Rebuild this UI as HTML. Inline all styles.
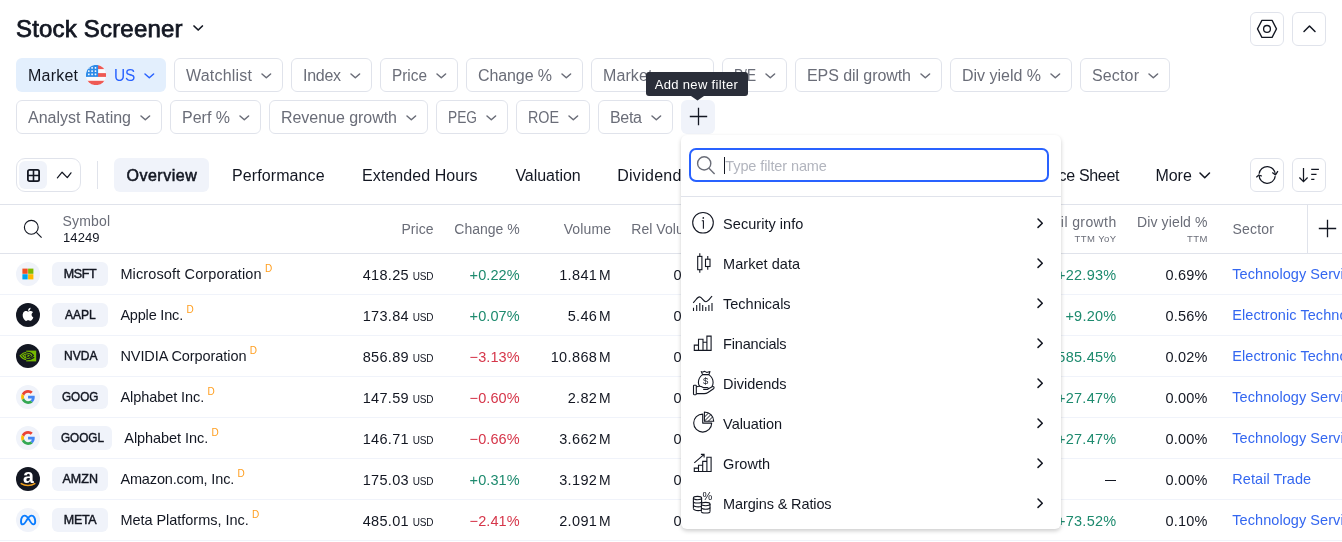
<!DOCTYPE html><html><head><meta charset="utf-8"><title>Stock Screener</title><style>html,body{margin:0;padding:0;background:#fff;}body{width:1342px;height:542px;position:relative;overflow:hidden;font-family:"Liberation Sans",sans-serif;}.a{position:absolute;box-sizing:border-box;display:block}.t{position:absolute;white-space:pre;line-height:1;}#w{position:absolute;left:0;top:0;width:1342px;height:542px;overflow:hidden;will-change:transform;}</style></head><body><div id="w">
<svg class="a" style="left:192.0px;top:24.4px" width="12.4" height="8" viewBox="-2 -2 12.4 8"><path d="M0 0 L4.2 4 L8.4 0" fill="none" stroke="#131722" stroke-width="1.7" stroke-linecap="round" stroke-linejoin="round"/></svg>
<div class="a" style="left:1250px;top:12px;width:34px;height:34px;background:#fff;border-radius:6px;border:1px solid #e0e3eb;"></div>
<div class="a" style="left:1292px;top:12px;width:34px;height:34px;background:#fff;border-radius:6px;border:1px solid #e0e3eb;"></div>
<svg class="a" style="left:1256px;top:18px" width="22" height="22" viewBox="0 0 22 22"><path d="M5.9 2.4 H16.1 L20.5 10.9 L16.1 19.4 H5.9 L1.5 10.9 Z" fill="none" stroke="#131722" stroke-width="1.3" stroke-linejoin="round"/><circle cx="11" cy="10.9" r="3.4" fill="none" stroke="#131722" stroke-width="1.3"/></svg>
<svg class="a" style="left:1301.5px;top:23.75px" width="15" height="9.5" viewBox="-2 -2 15 9.5"><path d="M0 5.5 L5.5 0 L11 5.5" fill="none" stroke="#131722" stroke-width="1.5" stroke-linecap="round" stroke-linejoin="round"/></svg>
<div class="a" style="left:16px;top:58px;width:150px;height:34px;background:#e3effd;border-radius:6px;"></div>
<svg class="a" style="left:142.7px;top:71.6px" width="12.6" height="7.8" viewBox="-2 -2 12.6 7.8"><path d="M0 0 L4.3 3.8 L8.6 0" fill="none" stroke="#2962ff" stroke-width="1.5" stroke-linecap="round" stroke-linejoin="round"/></svg>
<svg class="a" style="left:86px;top:65px" width="20" height="20" viewBox="0 0 20 20"><defs><clipPath id="fc"><circle cx="10" cy="10" r="10.1"/></clipPath></defs><g clip-path="url(#fc)"><rect width="20" height="21" y="-0.5" fill="#fafbfe"/><rect x="12" y="-0.5" width="8" height="4.6" fill="#ee5a55"/><rect x="12" y="8.1" width="8" height="3.8" fill="#ee5a55"/><rect x="0" y="15.8" width="20" height="4.6" fill="#ee5a55"/><rect x="0" y="-0.5" width="12.1" height="12.4" fill="#2e8be8"/><g fill="#f2f7fd"><rect x="1.9499999999999997" y="2.05" width="1.7" height="1.7" rx="0.4"/><rect x="1.9499999999999997" y="5.25" width="1.7" height="1.7" rx="0.4"/><rect x="1.9499999999999997" y="8.450000000000001" width="1.7" height="1.7" rx="0.4"/><rect x="5.25" y="2.05" width="1.7" height="1.7" rx="0.4"/><rect x="5.25" y="5.25" width="1.7" height="1.7" rx="0.4"/><rect x="5.25" y="8.450000000000001" width="1.7" height="1.7" rx="0.4"/><rect x="8.65" y="2.05" width="1.7" height="1.7" rx="0.4"/><rect x="8.65" y="5.25" width="1.7" height="1.7" rx="0.4"/><rect x="8.65" y="8.450000000000001" width="1.7" height="1.7" rx="0.4"/></g></g></svg>
<div class="a" style="left:174px;top:58px;width:109px;height:34px;background:#fff;border-radius:6px;border:1px solid #e0e3eb;"></div>
<svg class="a" style="left:259.7px;top:71.6px" width="12.6" height="7.8" viewBox="-2 -2 12.6 7.8"><path d="M0 0 L4.3 3.8 L8.6 0" fill="none" stroke="#6a6d78" stroke-width="1.5" stroke-linecap="round" stroke-linejoin="round"/></svg>
<div class="a" style="left:291px;top:58px;width:81px;height:34px;background:#fff;border-radius:6px;border:1px solid #e0e3eb;"></div>
<svg class="a" style="left:348.7px;top:71.6px" width="12.6" height="7.8" viewBox="-2 -2 12.6 7.8"><path d="M0 0 L4.3 3.8 L8.6 0" fill="none" stroke="#6a6d78" stroke-width="1.5" stroke-linecap="round" stroke-linejoin="round"/></svg>
<div class="a" style="left:380px;top:58px;width:78px;height:34px;background:#fff;border-radius:6px;border:1px solid #e0e3eb;"></div>
<svg class="a" style="left:434.7px;top:71.6px" width="12.6" height="7.8" viewBox="-2 -2 12.6 7.8"><path d="M0 0 L4.3 3.8 L8.6 0" fill="none" stroke="#6a6d78" stroke-width="1.5" stroke-linecap="round" stroke-linejoin="round"/></svg>
<div class="a" style="left:466px;top:58px;width:117px;height:34px;background:#fff;border-radius:6px;border:1px solid #e0e3eb;"></div>
<svg class="a" style="left:559.7px;top:71.6px" width="12.6" height="7.8" viewBox="-2 -2 12.6 7.8"><path d="M0 0 L4.3 3.8 L8.6 0" fill="none" stroke="#6a6d78" stroke-width="1.5" stroke-linecap="round" stroke-linejoin="round"/></svg>
<div class="a" style="left:591px;top:58px;width:123px;height:34px;background:#fff;border-radius:6px;border:1px solid #e0e3eb;"></div>
<svg class="a" style="left:690.7px;top:71.6px" width="12.6" height="7.8" viewBox="-2 -2 12.6 7.8"><path d="M0 0 L4.3 3.8 L8.6 0" fill="none" stroke="#6a6d78" stroke-width="1.5" stroke-linecap="round" stroke-linejoin="round"/></svg>
<div class="a" style="left:722px;top:58px;width:65px;height:34px;background:#fff;border-radius:6px;border:1px solid #e0e3eb;"></div>
<svg class="a" style="left:763.7px;top:71.6px" width="12.6" height="7.8" viewBox="-2 -2 12.6 7.8"><path d="M0 0 L4.3 3.8 L8.6 0" fill="none" stroke="#6a6d78" stroke-width="1.5" stroke-linecap="round" stroke-linejoin="round"/></svg>
<div class="a" style="left:795px;top:58px;width:147px;height:34px;background:#fff;border-radius:6px;border:1px solid #e0e3eb;"></div>
<svg class="a" style="left:918.7px;top:71.6px" width="12.6" height="7.8" viewBox="-2 -2 12.6 7.8"><path d="M0 0 L4.3 3.8 L8.6 0" fill="none" stroke="#6a6d78" stroke-width="1.5" stroke-linecap="round" stroke-linejoin="round"/></svg>
<div class="a" style="left:950px;top:58px;width:122px;height:34px;background:#fff;border-radius:6px;border:1px solid #e0e3eb;"></div>
<svg class="a" style="left:1048.7px;top:71.6px" width="12.6" height="7.8" viewBox="-2 -2 12.6 7.8"><path d="M0 0 L4.3 3.8 L8.6 0" fill="none" stroke="#6a6d78" stroke-width="1.5" stroke-linecap="round" stroke-linejoin="round"/></svg>
<div class="a" style="left:1080px;top:58px;width:90px;height:34px;background:#fff;border-radius:6px;border:1px solid #e0e3eb;"></div>
<svg class="a" style="left:1146.7px;top:71.6px" width="12.6" height="7.8" viewBox="-2 -2 12.6 7.8"><path d="M0 0 L4.3 3.8 L8.6 0" fill="none" stroke="#6a6d78" stroke-width="1.5" stroke-linecap="round" stroke-linejoin="round"/></svg>
<div class="a" style="left:16px;top:100px;width:146px;height:34px;background:#fff;border-radius:6px;border:1px solid #e0e3eb;"></div>
<svg class="a" style="left:138.7px;top:113.6px" width="12.6" height="7.8" viewBox="-2 -2 12.6 7.8"><path d="M0 0 L4.3 3.8 L8.6 0" fill="none" stroke="#6a6d78" stroke-width="1.5" stroke-linecap="round" stroke-linejoin="round"/></svg>
<div class="a" style="left:170px;top:100px;width:91px;height:34px;background:#fff;border-radius:6px;border:1px solid #e0e3eb;"></div>
<svg class="a" style="left:237.7px;top:113.6px" width="12.6" height="7.8" viewBox="-2 -2 12.6 7.8"><path d="M0 0 L4.3 3.8 L8.6 0" fill="none" stroke="#6a6d78" stroke-width="1.5" stroke-linecap="round" stroke-linejoin="round"/></svg>
<div class="a" style="left:269px;top:100px;width:159px;height:34px;background:#fff;border-radius:6px;border:1px solid #e0e3eb;"></div>
<svg class="a" style="left:404.7px;top:113.6px" width="12.6" height="7.8" viewBox="-2 -2 12.6 7.8"><path d="M0 0 L4.3 3.8 L8.6 0" fill="none" stroke="#6a6d78" stroke-width="1.5" stroke-linecap="round" stroke-linejoin="round"/></svg>
<div class="a" style="left:436px;top:100px;width:72px;height:34px;background:#fff;border-radius:6px;border:1px solid #e0e3eb;"></div>
<svg class="a" style="left:484.7px;top:113.6px" width="12.6" height="7.8" viewBox="-2 -2 12.6 7.8"><path d="M0 0 L4.3 3.8 L8.6 0" fill="none" stroke="#6a6d78" stroke-width="1.5" stroke-linecap="round" stroke-linejoin="round"/></svg>
<div class="a" style="left:516px;top:100px;width:74px;height:34px;background:#fff;border-radius:6px;border:1px solid #e0e3eb;"></div>
<svg class="a" style="left:566.7px;top:113.6px" width="12.6" height="7.8" viewBox="-2 -2 12.6 7.8"><path d="M0 0 L4.3 3.8 L8.6 0" fill="none" stroke="#6a6d78" stroke-width="1.5" stroke-linecap="round" stroke-linejoin="round"/></svg>
<div class="a" style="left:598px;top:100px;width:75px;height:34px;background:#fff;border-radius:6px;border:1px solid #e0e3eb;"></div>
<svg class="a" style="left:649.7px;top:113.6px" width="12.6" height="7.8" viewBox="-2 -2 12.6 7.8"><path d="M0 0 L4.3 3.8 L8.6 0" fill="none" stroke="#6a6d78" stroke-width="1.5" stroke-linecap="round" stroke-linejoin="round"/></svg>
<div class="a" style="left:681px;top:100px;width:34px;height:34px;background:#f0f3fa;border-radius:6px;"></div>
<svg class="a" style="left:689px;top:107px" width="19" height="19" viewBox="0 0 19 19"><path d="M9.5 0.8 V18.2 M0.8 9.5 H18.2" stroke="#131722" stroke-width="1.3" fill="none"/></svg>
<div class="a" style="left:16px;top:158px;width:65px;height:34px;background:#fff;border-radius:9px;border:1px solid #e0e3eb;"></div>
<div class="a" style="left:19px;top:161px;width:28px;height:28px;background:#f0f3fa;border-radius:6px;"></div>
<svg class="a" style="left:26px;top:168px" width="15" height="15" viewBox="0 0 15 15"><rect x="1.9" y="1.9" width="11.2" height="11.2" rx="1.6" fill="none" stroke="#131722" stroke-width="1.8"/><path d="M1.9 7.5 H13.1 M7.5 1.9 V13.1" stroke="#131722" stroke-width="1.6" fill="none"/></svg>
<svg class="a" style="left:55px;top:168px" width="18" height="14" viewBox="0 0 18 14"><path d="M2.4 9.8 L7.1 4.2 L12.3 9.6 L16 4.8" fill="none" stroke="#131722" stroke-width="1.25" stroke-linejoin="round" stroke-linecap="round"/></svg>
<div class="a" style="left:97px;top:161px;width:1px;height:28px;background:#e0e3eb;border-radius:0px;"></div>
<div class="a" style="left:114px;top:158px;width:95px;height:34px;background:#f0f3fa;border-radius:6px;"></div>
<svg class="a" style="left:1198.25px;top:171.1px" width="13.5" height="8.8" viewBox="-2 -2 13.5 8.8"><path d="M0 0 L4.75 4.8 L9.5 0" fill="none" stroke="#131722" stroke-width="1.5" stroke-linecap="round" stroke-linejoin="round"/></svg>
<div class="a" style="left:1250px;top:158px;width:34px;height:34px;background:#fff;border-radius:6px;border:1px solid #e0e3eb;"></div>
<div class="a" style="left:1292px;top:158px;width:34px;height:34px;background:#fff;border-radius:6px;border:1px solid #e0e3eb;"></div>
<svg class="a" style="left:1256px;top:164px" width="23" height="22" viewBox="0 0 23 22"><g fill="none" stroke="#131722" stroke-width="1.25" stroke-linejoin="round"><path d="M3.15 9.8 A8.1 8.1 0 0 1 19.3 10.5"/><path d="M19.25 12.1 A8.1 8.1 0 0 1 3.1 11.4"/><path d="M16.3 8.5 L19.5 10.9 L21.9 7.1"/><path d="M0.3 13.4 L2.8 11 L5.8 12.1"/></g></svg>
<svg class="a" style="left:1298px;top:165px" width="22" height="20" viewBox="0 0 22 20"><path d="M5.5 3 V16.4 M1.4 12.5 L5.5 16.6 L9.6 12.5" fill="none" stroke="#131722" stroke-width="1.25"/><path d="M13.2 4.3 H20.9 M13.2 9.4 H18.5 M13.2 14.35 H16.4" stroke="#131722" stroke-width="1.25" fill="none"/></svg>
<div class="a" style="left:0px;top:204px;width:1342px;height:1px;background:#e0e3eb;border-radius:0px;"></div>
<div class="a" style="left:0px;top:253px;width:1342px;height:1px;background:#e0e3eb;border-radius:0px;"></div>
<svg class="a" style="left:22px;top:218.4px" width="22" height="22" viewBox="0 0 22 22"><circle cx="9.3" cy="9.3" r="6.9" fill="none" stroke="#131722" stroke-width="1.15"/><path d="M14.4 14.4 L19.6 19.6" stroke="#131722" stroke-width="1.15" fill="none"/></svg>
<div class="a" style="left:1307px;top:205px;width:1px;height:48px;background:#e0e3eb;border-radius:0px;"></div>
<svg class="a" style="left:1318px;top:219px" width="19" height="19" viewBox="0 0 19 19"><path d="M9.5 0.8 V18.2 M0.8 9.5 H18.2" stroke="#131722" stroke-width="1.3" fill="none"/></svg>
<div class="a" style="left:0px;top:294px;width:1342px;height:1px;background:#f0f3fa;border-radius:0px;"></div>
<div class="a" style="left:52px;top:262px;width:56px;height:24px;background:#f0f3fa;border-radius:6px;"></div>
<div class="a" style="left:0px;top:335px;width:1342px;height:1px;background:#f0f3fa;border-radius:0px;"></div>
<div class="a" style="left:52px;top:303px;width:56px;height:24px;background:#f0f3fa;border-radius:6px;"></div>
<div class="a" style="left:0px;top:376px;width:1342px;height:1px;background:#f0f3fa;border-radius:0px;"></div>
<div class="a" style="left:52px;top:344px;width:56px;height:24px;background:#f0f3fa;border-radius:6px;"></div>
<div class="a" style="left:0px;top:417px;width:1342px;height:1px;background:#f0f3fa;border-radius:0px;"></div>
<div class="a" style="left:52px;top:385px;width:56px;height:24px;background:#f0f3fa;border-radius:6px;"></div>
<div class="a" style="left:0px;top:458px;width:1342px;height:1px;background:#f0f3fa;border-radius:0px;"></div>
<div class="a" style="left:52px;top:426px;width:60px;height:24px;background:#f0f3fa;border-radius:6px;"></div>
<div class="a" style="left:0px;top:499px;width:1342px;height:1px;background:#f0f3fa;border-radius:0px;"></div>
<div class="a" style="left:52px;top:467px;width:56px;height:24px;background:#f0f3fa;border-radius:6px;"></div>
<div class="a" style="left:1105px;top:479.85px;width:11.2px;height:1.15px;background:#131722;border-radius:0px;"></div>
<div class="a" style="left:0px;top:540px;width:1342px;height:1px;background:#f0f3fa;border-radius:0px;"></div>
<div class="a" style="left:52px;top:508px;width:56px;height:24px;background:#f0f3fa;border-radius:6px;"></div>
<div class="a" style="left:16px;top:262px;width:24px;height:24px;background:#f0f3fa;border-radius:12px;"></div>
<svg class="a" style="left:16px;top:262px" width="24" height="24" viewBox="0 0 24 24"><rect x="6.4" y="6.6" width="5.3" height="5.2" fill="#f25022"/><rect x="12.1" y="6.6" width="5.3" height="5.2" fill="#7fba00"/><rect x="6.4" y="12.2" width="5.3" height="5.2" fill="#00a4ef"/><rect x="12.1" y="12.2" width="5.3" height="5.2" fill="#ffb900"/></svg>
<div class="a" style="left:16px;top:303px;width:24px;height:24px;background:#131722;border-radius:12px;"></div>
<svg class="a" style="left:16px;top:303px" width="24" height="24" viewBox="0 0 24 24"><g transform="translate(5.45,4.8) scale(0.545)" fill="#fff"><path d="M12.152 6.896c-.948 0-2.415-1.078-3.96-1.04-2.04.027-3.91 1.183-4.961 3.014-2.117 3.675-.546 9.103 1.519 12.09 1.013 1.454 2.208 3.09 3.792 3.039 1.52-.065 2.09-.987 3.935-.987 1.831 0 2.35.987 3.96.948 1.637-.026 2.676-1.48 3.676-2.948 1.156-1.688 1.636-3.325 1.662-3.415-.039-.013-3.182-1.221-3.22-4.857-.026-3.04 2.48-4.494 2.597-4.559-1.429-2.09-3.623-2.324-4.39-2.376-2-.156-3.675 1.09-4.61 1.09zM15.53 3.83c.843-1.012 1.4-2.427 1.245-3.83-1.207.052-2.662.805-3.532 1.818-.78.896-1.454 2.338-1.273 3.714 1.338.104 2.715-.688 3.559-1.701"/></g></svg>
<div class="a" style="left:16px;top:344px;width:24px;height:24px;background:#131722;border-radius:12px;"></div>
<svg class="a" style="left:16px;top:344px" width="24" height="24" viewBox="0 0 24 24"><rect x="10.2" y="6.6" width="10" height="10.8" fill="#76b900"/><g fill="none" stroke-width="1.15"><path d="M10.2 8.3 C7.4 8.6 5.4 10.4 4.2 11.6 C5.6 13.6 7.8 15.3 10.2 15.6" stroke="#76b900"/><path d="M10.2 10 C8.6 10.2 7.4 11 6.8 11.7 C7.6 12.8 8.8 13.7 10.2 13.9" stroke="#76b900"/><path d="M10.2 8.3 C13.6 8 16.2 9.6 17.4 11.4 C16.4 12.6 14.8 13.6 13.6 14" stroke="#131722"/><path d="M10.2 15.6 C13.4 15.9 16 14.8 18.2 13.2" stroke="#131722"/><path d="M10.2 10 C12.2 9.8 13.8 10.6 14.6 11.6 C13.8 12.6 12.4 13.6 10.2 13.9" stroke="#131722"/></g><circle cx="10.6" cy="11.8" r="1.1" fill="#131722"/><path d="M10.2 10.7 C9.4 10.9 9 11.4 9 11.9 C9 12.4 9.5 12.9 10.2 13" fill="none" stroke="#76b900" stroke-width="0.9"/></svg>
<div class="a" style="left:16px;top:385px;width:24px;height:24px;background:#f0f3fa;border-radius:12px;"></div>
<svg class="a" style="left:16px;top:385px" width="24" height="24" viewBox="0 0 24 24"><g transform="translate(5.1,5) scale(0.29)"><path fill="#EA4335" d="M24 9.5c3.54 0 6.71 1.22 9.21 3.6l6.85-6.85C35.9 2.38 30.47 0 24 0 14.62 0 6.51 5.38 2.56 13.22l7.98 6.19C12.43 13.72 17.74 9.5 24 9.5z"/><path fill="#4285F4" d="M46.98 24.55c0-1.57-.15-3.09-.38-4.55H24v9.02h12.94c-.58 2.96-2.26 5.48-4.78 7.18l7.73 6c4.51-4.18 7.09-10.36 7.09-17.65z"/><path fill="#FBBC05" d="M10.53 28.59c-.48-1.45-.76-2.99-.76-4.59s.27-3.14.76-4.59l-7.98-6.19C.92 16.46 0 20.12 0 24c0 3.88.92 7.54 2.56 10.78l7.97-6.19z"/><path fill="#34A853" d="M24 48c6.48 0 11.93-2.13 15.89-5.81l-7.73-6c-2.15 1.45-4.92 2.3-8.16 2.3-6.26 0-11.57-4.22-13.47-9.91l-7.98 6.19C6.51 42.62 14.62 48 24 48z"/></g></svg>
<div class="a" style="left:16px;top:426px;width:24px;height:24px;background:#f0f3fa;border-radius:12px;"></div>
<svg class="a" style="left:16px;top:426px" width="24" height="24" viewBox="0 0 24 24"><g transform="translate(5.1,5) scale(0.29)"><path fill="#EA4335" d="M24 9.5c3.54 0 6.71 1.22 9.21 3.6l6.85-6.85C35.9 2.38 30.47 0 24 0 14.62 0 6.51 5.38 2.56 13.22l7.98 6.19C12.43 13.72 17.74 9.5 24 9.5z"/><path fill="#4285F4" d="M46.98 24.55c0-1.57-.15-3.09-.38-4.55H24v9.02h12.94c-.58 2.96-2.26 5.48-4.78 7.18l7.73 6c4.51-4.18 7.09-10.36 7.09-17.65z"/><path fill="#FBBC05" d="M10.53 28.59c-.48-1.45-.76-2.99-.76-4.59s.27-3.14.76-4.59l-7.98-6.19C.92 16.46 0 20.12 0 24c0 3.88.92 7.54 2.56 10.78l7.97-6.19z"/><path fill="#34A853" d="M24 48c6.48 0 11.93-2.13 15.89-5.81l-7.73-6c-2.15 1.45-4.92 2.3-8.16 2.3-6.26 0-11.57-4.22-13.47-9.91l-7.98 6.19C6.51 42.62 14.62 48 24 48z"/></g></svg>
<div class="a" style="left:16px;top:467px;width:24px;height:24px;background:#131722;border-radius:12px;"></div>
<svg class="a" style="left:16px;top:467px" width="24" height="24" viewBox="0 0 24 24"><text x="12.4" y="15.9" font-family="Liberation Sans" font-weight="700" font-size="19.5" fill="#fff" text-anchor="middle">a</text><path d="M5.2 16.6 C9 19.2 15 19.2 18.8 16.6" fill="none" stroke="#f0a01e" stroke-width="1.5" stroke-linecap="round"/></svg>
<div class="a" style="left:16px;top:508px;width:24px;height:24px;background:#f0f3fa;border-radius:12px;"></div>
<svg class="a" style="left:16px;top:508px" width="24" height="24" viewBox="0 0 24 24"><path d="M5 13.4 C5 10 6.5 7.6 8.6 7.6 C10.6 7.6 12 9.6 13.4 12 C14.8 14.4 15.8 16.4 17.4 16.4 C18.7 16.4 19.2 15.2 19.2 13.6 C19.2 10.1 17.7 7.6 15.6 7.6 C13.6 7.6 12.2 9.6 10.8 12 C9.4 14.4 8.4 16.4 6.8 16.4 C5.5 16.4 5 15.1 5 13.4 Z" fill="none" stroke="#0a7cff" stroke-width="1.9" stroke-linejoin="round"/></svg>
<span class="t" style="left:16.00px;top:16.52px;font-size:24px;color:#131722;font-weight:400;letter-spacing:0.186px;-webkit-text-stroke:0.75px #131722;">Stock Screener</span>
<span class="t" style="left:28.00px;top:67.52px;font-size:16px;color:#131722;font-weight:400;letter-spacing:0.219px;">Market</span>
<span class="t" style="left:114.40px;top:67.52px;font-size:16px;color:#2962ff;font-weight:400;letter-spacing:0.000px;transform:scaleX(0.9625);transform-origin:0 0;">US</span>
<span class="t" style="left:186.00px;top:67.52px;font-size:16px;color:#6a6d78;font-weight:400;letter-spacing:0.211px;">Watchlist</span>
<span class="t" style="left:303.00px;top:67.52px;font-size:16px;color:#6a6d78;font-weight:400;letter-spacing:-0.285px;">Index</span>
<span class="t" style="left:392.00px;top:67.52px;font-size:16px;color:#6a6d78;font-weight:400;letter-spacing:0.000px;transform:scaleX(0.9601);transform-origin:0 0;">Price</span>
<span class="t" style="left:478.00px;top:67.52px;font-size:16px;color:#6a6d78;font-weight:400;letter-spacing:-0.103px;">Change %</span>
<span class="t" style="left:603.00px;top:67.52px;font-size:16px;color:#6a6d78;font-weight:400;letter-spacing:0.095px;">Market cap</span>
<span class="t" style="left:734.00px;top:67.52px;font-size:16px;color:#6a6d78;font-weight:400;letter-spacing:0.000px;transform:scaleX(0.8528);transform-origin:0 0;">P/E</span>
<span class="t" style="left:807.00px;top:67.52px;font-size:16px;color:#6a6d78;font-weight:400;letter-spacing:-0.072px;">EPS dil growth</span>
<span class="t" style="left:962.00px;top:67.52px;font-size:16px;color:#6a6d78;font-weight:400;letter-spacing:-0.014px;">Div yield %</span>
<span class="t" style="left:1092.00px;top:67.52px;font-size:16px;color:#6a6d78;font-weight:400;letter-spacing:0.150px;">Sector</span>
<span class="t" style="left:28.00px;top:109.52px;font-size:16px;color:#6a6d78;font-weight:400;letter-spacing:-0.013px;">Analyst Rating</span>
<span class="t" style="left:182.00px;top:109.52px;font-size:16px;color:#6a6d78;font-weight:400;letter-spacing:-0.003px;">Perf %</span>
<span class="t" style="left:281.00px;top:109.52px;font-size:16px;color:#6a6d78;font-weight:400;letter-spacing:-0.040px;">Revenue growth</span>
<span class="t" style="left:448.00px;top:109.52px;font-size:16px;color:#6a6d78;font-weight:400;letter-spacing:0.000px;transform:scaleX(0.8581);transform-origin:0 0;">PEG</span>
<span class="t" style="left:528.00px;top:109.52px;font-size:16px;color:#6a6d78;font-weight:400;letter-spacing:0.000px;transform:scaleX(0.8941);transform-origin:0 0;">ROE</span>
<span class="t" style="left:610.00px;top:109.52px;font-size:16px;color:#6a6d78;font-weight:400;letter-spacing:-0.307px;">Beta</span>
<span class="t" style="left:126.50px;top:167.52px;font-size:16px;color:#131722;font-weight:400;letter-spacing:0.502px;-webkit-text-stroke:0.55px #131722;">Overview</span>
<span class="t" style="left:232.00px;top:167.52px;font-size:16px;color:#131722;font-weight:400;letter-spacing:0.101px;">Performance</span>
<span class="t" style="left:362.10px;top:167.52px;font-size:16px;color:#131722;font-weight:400;letter-spacing:0.059px;">Extended Hours</span>
<span class="t" style="left:515.40px;top:167.52px;font-size:16px;color:#131722;font-weight:400;letter-spacing:-0.029px;">Valuation</span>
<span class="t" style="left:617.20px;top:167.52px;font-size:16px;color:#131722;font-weight:400;letter-spacing:0.279px;">Dividends</span>
<span class="t" style="left:1019.00px;top:167.52px;font-size:16px;color:#131722;font-weight:400;letter-spacing:-0.298px;">Balance Sheet</span>
<span class="t" style="left:1155.50px;top:167.52px;font-size:16px;color:#131722;font-weight:400;letter-spacing:-0.051px;">More</span>
<span class="t" style="left:62.60px;top:214.12px;font-size:14px;color:#6a6d78;font-weight:400;letter-spacing:0.142px;">Symbol</span>
<span class="t" style="left:63.10px;top:231.22px;font-size:13px;color:#131722;font-weight:400;letter-spacing:0.036px;">14249</span>
<span class="t" style="left:401.40px;top:221.82px;font-size:14px;color:#6a6d78;font-weight:400;letter-spacing:0.048px;">Price</span>
<span class="t" style="left:454.30px;top:221.82px;font-size:14px;color:#6a6d78;font-weight:400;letter-spacing:-0.013px;">Change %</span>
<span class="t" style="left:563.70px;top:221.82px;font-size:14px;color:#6a6d78;font-weight:400;letter-spacing:0.119px;">Volume</span>
<span class="t" style="left:631.30px;top:221.82px;font-size:14px;color:#6a6d78;font-weight:400;letter-spacing:0.045px;">Rel Volume</span>
<span class="t" style="left:1019.20px;top:215.02px;font-size:14px;color:#6a6d78;font-weight:400;letter-spacing:0.398px;">EPS dil growth</span>
<span class="t" style="left:1074.40px;top:233.77px;font-size:9.5px;color:#6a6d78;font-weight:400;letter-spacing:0.454px;">TTM YoY</span>
<span class="t" style="left:1137.00px;top:215.02px;font-size:14px;color:#6a6d78;font-weight:400;letter-spacing:0.125px;">Div yield %</span>
<span class="t" style="left:1187.00px;top:233.77px;font-size:9.5px;color:#6a6d78;font-weight:400;letter-spacing:0.484px;">TTM</span>
<span class="t" style="left:1232.40px;top:221.92px;font-size:14px;color:#6a6d78;font-weight:400;letter-spacing:0.226px;">Sector</span>
<span class="t" style="left:63.70px;top:267.77px;font-size:12.5px;color:#131722;font-weight:400;letter-spacing:-0.344px;-webkit-text-stroke:0.45px #131722;">MSFT</span>
<span class="t" style="left:120.40px;top:266.77px;font-size:14.5px;color:#131722;font-weight:400;letter-spacing:0.130px;">Microsoft Corporation</span>
<span class="t" style="left:264.90px;top:263.52px;font-size:10px;color:#ff9d1c;font-weight:400;letter-spacing:0.000px;">D</span>
<span class="t" style="left:412.80px;top:271.52px;font-size:10px;color:#131722;font-weight:400;letter-spacing:-0.213px;">USD</span>
<span class="t" style="left:362.70px;top:267.77px;font-size:14.5px;color:#131722;font-weight:400;letter-spacing:0.308px;">418.25</span>
<span class="t" style="left:469.60px;top:267.77px;font-size:14.5px;color:#1d8a6e;font-weight:400;letter-spacing:0.081px;">+0.22%</span>
<span class="t" style="left:599.40px;top:267.77px;font-size:14.5px;color:#131722;font-weight:400;letter-spacing:0.000px;transform:scaleX(0.9592);transform-origin:0 0;">M</span>
<span class="t" style="left:559.20px;top:267.77px;font-size:14.5px;color:#131722;font-weight:400;letter-spacing:0.351px;">1.841</span>
<span class="t" style="left:673.60px;top:267.77px;font-size:14.5px;color:#131722;font-weight:400;letter-spacing:-0.086px;">0.8</span>
<span class="t" style="left:1057.00px;top:267.77px;font-size:14.5px;color:#1d8a6e;font-weight:400;letter-spacing:0.257px;">+22.93%</span>
<span class="t" style="left:1165.40px;top:267.77px;font-size:14.5px;color:#131722;font-weight:400;letter-spacing:0.244px;">0.69%</span>
<span class="t" style="left:1232.30px;top:266.77px;font-size:14.5px;color:#3467f0;font-weight:400;letter-spacing:0.000px;letter-spacing:0.06px;">Technology Services</span>
<span class="t" style="left:64.80px;top:308.77px;font-size:12.5px;color:#131722;font-weight:400;letter-spacing:0.000px;transform:scaleX(0.9634);transform-origin:0 0;-webkit-text-stroke:0.45px #131722;">AAPL</span>
<span class="t" style="left:120.40px;top:307.77px;font-size:14.5px;color:#131722;font-weight:400;letter-spacing:-0.189px;">Apple Inc.</span>
<span class="t" style="left:186.50px;top:304.52px;font-size:10px;color:#ff9d1c;font-weight:400;letter-spacing:0.000px;">D</span>
<span class="t" style="left:412.80px;top:312.52px;font-size:10px;color:#131722;font-weight:400;letter-spacing:-0.213px;">USD</span>
<span class="t" style="left:362.70px;top:308.77px;font-size:14.5px;color:#131722;font-weight:400;letter-spacing:0.308px;">173.84</span>
<span class="t" style="left:469.60px;top:308.77px;font-size:14.5px;color:#1d8a6e;font-weight:400;letter-spacing:0.081px;">+0.07%</span>
<span class="t" style="left:599.40px;top:308.77px;font-size:14.5px;color:#131722;font-weight:400;letter-spacing:0.000px;transform:scaleX(0.9592);transform-origin:0 0;">M</span>
<span class="t" style="left:567.70px;top:308.77px;font-size:14.5px;color:#131722;font-weight:400;letter-spacing:0.322px;">5.46</span>
<span class="t" style="left:673.60px;top:308.77px;font-size:14.5px;color:#131722;font-weight:400;letter-spacing:-0.086px;">0.8</span>
<span class="t" style="left:1065.40px;top:308.77px;font-size:14.5px;color:#1d8a6e;font-weight:400;letter-spacing:0.241px;">+9.20%</span>
<span class="t" style="left:1165.40px;top:308.77px;font-size:14.5px;color:#131722;font-weight:400;letter-spacing:0.244px;">0.56%</span>
<span class="t" style="left:1232.30px;top:307.77px;font-size:14.5px;color:#3467f0;font-weight:400;letter-spacing:0.000px;letter-spacing:0.06px;">Electronic Technology</span>
<span class="t" style="left:63.50px;top:349.77px;font-size:12.5px;color:#131722;font-weight:400;letter-spacing:0.000px;transform:scaleX(0.9616);transform-origin:0 0;-webkit-text-stroke:0.45px #131722;">NVDA</span>
<span class="t" style="left:120.40px;top:348.77px;font-size:14.5px;color:#131722;font-weight:400;letter-spacing:-0.073px;">NVIDIA Corporation</span>
<span class="t" style="left:249.80px;top:345.52px;font-size:10px;color:#ff9d1c;font-weight:400;letter-spacing:0.000px;">D</span>
<span class="t" style="left:412.80px;top:353.52px;font-size:10px;color:#131722;font-weight:400;letter-spacing:-0.213px;">USD</span>
<span class="t" style="left:362.70px;top:349.77px;font-size:14.5px;color:#131722;font-weight:400;letter-spacing:0.308px;">856.89</span>
<span class="t" style="left:469.60px;top:349.77px;font-size:14.5px;color:#d6364a;font-weight:400;letter-spacing:0.081px;">−3.13%</span>
<span class="t" style="left:599.40px;top:349.77px;font-size:14.5px;color:#131722;font-weight:400;letter-spacing:0.000px;transform:scaleX(0.9592);transform-origin:0 0;">M</span>
<span class="t" style="left:550.70px;top:349.77px;font-size:14.5px;color:#131722;font-weight:400;letter-spacing:0.368px;">10.868</span>
<span class="t" style="left:673.60px;top:349.77px;font-size:14.5px;color:#131722;font-weight:400;letter-spacing:-0.086px;">0.8</span>
<span class="t" style="left:1048.60px;top:349.77px;font-size:14.5px;color:#1d8a6e;font-weight:400;letter-spacing:0.269px;">+585.45%</span>
<span class="t" style="left:1165.40px;top:349.77px;font-size:14.5px;color:#131722;font-weight:400;letter-spacing:0.244px;">0.02%</span>
<span class="t" style="left:1232.30px;top:348.77px;font-size:14.5px;color:#3467f0;font-weight:400;letter-spacing:0.000px;letter-spacing:0.06px;">Electronic Technology</span>
<span class="t" style="left:62.00px;top:390.77px;font-size:12.5px;color:#131722;font-weight:400;letter-spacing:0.000px;transform:scaleX(0.9356);transform-origin:0 0;-webkit-text-stroke:0.45px #131722;">GOOG</span>
<span class="t" style="left:120.40px;top:389.77px;font-size:14.5px;color:#131722;font-weight:400;letter-spacing:-0.063px;">Alphabet Inc.</span>
<span class="t" style="left:207.60px;top:386.52px;font-size:10px;color:#ff9d1c;font-weight:400;letter-spacing:0.000px;">D</span>
<span class="t" style="left:412.80px;top:394.52px;font-size:10px;color:#131722;font-weight:400;letter-spacing:-0.213px;">USD</span>
<span class="t" style="left:362.70px;top:390.77px;font-size:14.5px;color:#131722;font-weight:400;letter-spacing:0.308px;">147.59</span>
<span class="t" style="left:469.60px;top:390.77px;font-size:14.5px;color:#d6364a;font-weight:400;letter-spacing:0.081px;">−0.60%</span>
<span class="t" style="left:599.40px;top:390.77px;font-size:14.5px;color:#131722;font-weight:400;letter-spacing:0.000px;transform:scaleX(0.9592);transform-origin:0 0;">M</span>
<span class="t" style="left:567.70px;top:390.77px;font-size:14.5px;color:#131722;font-weight:400;letter-spacing:0.322px;">2.82</span>
<span class="t" style="left:673.60px;top:390.77px;font-size:14.5px;color:#131722;font-weight:400;letter-spacing:-0.086px;">0.8</span>
<span class="t" style="left:1057.00px;top:390.77px;font-size:14.5px;color:#1d8a6e;font-weight:400;letter-spacing:0.257px;">+27.47%</span>
<span class="t" style="left:1165.40px;top:390.77px;font-size:14.5px;color:#131722;font-weight:400;letter-spacing:0.244px;">0.00%</span>
<span class="t" style="left:1232.30px;top:389.77px;font-size:14.5px;color:#3467f0;font-weight:400;letter-spacing:0.000px;letter-spacing:0.06px;">Technology Services</span>
<span class="t" style="left:60.70px;top:431.77px;font-size:12.5px;color:#131722;font-weight:400;letter-spacing:0.000px;transform:scaleX(0.9380);transform-origin:0 0;-webkit-text-stroke:0.45px #131722;">GOOGL</span>
<span class="t" style="left:124.30px;top:430.77px;font-size:14.5px;color:#131722;font-weight:400;letter-spacing:-0.063px;">Alphabet Inc.</span>
<span class="t" style="left:211.50px;top:427.52px;font-size:10px;color:#ff9d1c;font-weight:400;letter-spacing:0.000px;">D</span>
<span class="t" style="left:412.80px;top:435.52px;font-size:10px;color:#131722;font-weight:400;letter-spacing:-0.213px;">USD</span>
<span class="t" style="left:362.70px;top:431.77px;font-size:14.5px;color:#131722;font-weight:400;letter-spacing:0.308px;">146.71</span>
<span class="t" style="left:469.60px;top:431.77px;font-size:14.5px;color:#d6364a;font-weight:400;letter-spacing:0.081px;">−0.66%</span>
<span class="t" style="left:599.40px;top:431.77px;font-size:14.5px;color:#131722;font-weight:400;letter-spacing:0.000px;transform:scaleX(0.9592);transform-origin:0 0;">M</span>
<span class="t" style="left:559.20px;top:431.77px;font-size:14.5px;color:#131722;font-weight:400;letter-spacing:0.351px;">3.662</span>
<span class="t" style="left:673.60px;top:431.77px;font-size:14.5px;color:#131722;font-weight:400;letter-spacing:-0.086px;">0.8</span>
<span class="t" style="left:1057.00px;top:431.77px;font-size:14.5px;color:#1d8a6e;font-weight:400;letter-spacing:0.257px;">+27.47%</span>
<span class="t" style="left:1165.40px;top:431.77px;font-size:14.5px;color:#131722;font-weight:400;letter-spacing:0.244px;">0.00%</span>
<span class="t" style="left:1232.30px;top:430.77px;font-size:14.5px;color:#3467f0;font-weight:400;letter-spacing:0.000px;letter-spacing:0.06px;">Technology Services</span>
<span class="t" style="left:62.45px;top:472.77px;font-size:12.5px;color:#131722;font-weight:400;letter-spacing:0.026px;-webkit-text-stroke:0.45px #131722;">AMZN</span>
<span class="t" style="left:120.40px;top:471.77px;font-size:14.5px;color:#131722;font-weight:400;letter-spacing:-0.143px;">Amazon.com, Inc.</span>
<span class="t" style="left:237.60px;top:468.52px;font-size:10px;color:#ff9d1c;font-weight:400;letter-spacing:0.000px;">D</span>
<span class="t" style="left:412.80px;top:476.52px;font-size:10px;color:#131722;font-weight:400;letter-spacing:-0.213px;">USD</span>
<span class="t" style="left:362.70px;top:472.77px;font-size:14.5px;color:#131722;font-weight:400;letter-spacing:0.308px;">175.03</span>
<span class="t" style="left:469.60px;top:472.77px;font-size:14.5px;color:#1d8a6e;font-weight:400;letter-spacing:0.081px;">+0.31%</span>
<span class="t" style="left:599.40px;top:472.77px;font-size:14.5px;color:#131722;font-weight:400;letter-spacing:0.000px;transform:scaleX(0.9592);transform-origin:0 0;">M</span>
<span class="t" style="left:559.20px;top:472.77px;font-size:14.5px;color:#131722;font-weight:400;letter-spacing:0.351px;">3.192</span>
<span class="t" style="left:673.60px;top:472.77px;font-size:14.5px;color:#131722;font-weight:400;letter-spacing:-0.086px;">0.8</span>
<span class="t" style="left:1165.40px;top:472.77px;font-size:14.5px;color:#131722;font-weight:400;letter-spacing:0.244px;">0.00%</span>
<span class="t" style="left:1232.30px;top:471.77px;font-size:14.5px;color:#3467f0;font-weight:400;letter-spacing:0.000px;letter-spacing:0.06px;">Retail Trade</span>
<span class="t" style="left:63.80px;top:513.77px;font-size:12.5px;color:#131722;font-weight:400;letter-spacing:-0.332px;-webkit-text-stroke:0.45px #131722;">META</span>
<span class="t" style="left:120.40px;top:512.77px;font-size:14.5px;color:#131722;font-weight:400;letter-spacing:-0.034px;">Meta Platforms, Inc.</span>
<span class="t" style="left:252.00px;top:509.52px;font-size:10px;color:#ff9d1c;font-weight:400;letter-spacing:0.000px;">D</span>
<span class="t" style="left:412.80px;top:517.52px;font-size:10px;color:#131722;font-weight:400;letter-spacing:-0.213px;">USD</span>
<span class="t" style="left:362.70px;top:513.77px;font-size:14.5px;color:#131722;font-weight:400;letter-spacing:0.308px;">485.01</span>
<span class="t" style="left:469.60px;top:513.77px;font-size:14.5px;color:#d6364a;font-weight:400;letter-spacing:0.081px;">−2.41%</span>
<span class="t" style="left:599.40px;top:513.77px;font-size:14.5px;color:#131722;font-weight:400;letter-spacing:0.000px;transform:scaleX(0.9592);transform-origin:0 0;">M</span>
<span class="t" style="left:559.20px;top:513.77px;font-size:14.5px;color:#131722;font-weight:400;letter-spacing:0.351px;">2.091</span>
<span class="t" style="left:673.60px;top:513.77px;font-size:14.5px;color:#131722;font-weight:400;letter-spacing:-0.086px;">0.8</span>
<span class="t" style="left:1057.00px;top:513.77px;font-size:14.5px;color:#1d8a6e;font-weight:400;letter-spacing:0.257px;">+73.52%</span>
<span class="t" style="left:1165.40px;top:513.77px;font-size:14.5px;color:#131722;font-weight:400;letter-spacing:0.244px;">0.10%</span>
<span class="t" style="left:1232.30px;top:512.77px;font-size:14.5px;color:#3467f0;font-weight:400;letter-spacing:0.000px;letter-spacing:0.06px;">Technology Services</span>
<div class="a" style="left:681px;top:134.5px;width:380px;height:394.5px;background:#fff;border-radius:6px;box-shadow:0 2px 4px rgba(0,0,0,.2);"></div>
<div class="a" style="left:689px;top:148px;width:360px;height:34px;background:#fff;border-radius:7px;border:2px solid #2962ff;"></div>
<svg class="a" style="left:695px;top:155px" width="22" height="22" viewBox="0 0 22 22"><circle cx="9.2" cy="8.4" r="6.6" fill="none" stroke="#6a6d78" stroke-width="1.4"/><path d="M14 13.3 L19.6 18.9" stroke="#6a6d78" stroke-width="1.4" fill="none"/></svg>
<div class="a" style="left:724px;top:157px;width:1px;height:17px;background:#131722;border-radius:0px;"></div>
<div class="a" style="left:681px;top:196px;width:380px;height:1px;background:#e0e3eb;border-radius:0px;"></div>
<div class="a" style="left:646px;top:72px;width:102px;height:24px;background:#2a2e39;border-radius:3px;"></div>
<svg class="a" style="left:691px;top:95.5px" width="13" height="5" viewBox="0 0 13 5"><path d="M0 0 H13 L6.5 4.5 Z" fill="#2a2e39"/></svg>
<svg class="a" style="left:1036.05px;top:216.9px" width="8.3" height="12.4" viewBox="-2 -2 8.3 12.4"><path d="M0 0 L4.3 4.2 L0 8.4" fill="none" stroke="#131722" stroke-width="1.5" stroke-linecap="round" stroke-linejoin="round"/></svg>
<svg class="a" style="left:1036.05px;top:256.90000000000003px" width="8.3" height="12.4" viewBox="-2 -2 8.3 12.4"><path d="M0 0 L4.3 4.2 L0 8.4" fill="none" stroke="#131722" stroke-width="1.5" stroke-linecap="round" stroke-linejoin="round"/></svg>
<svg class="a" style="left:1036.05px;top:296.90000000000003px" width="8.3" height="12.4" viewBox="-2 -2 8.3 12.4"><path d="M0 0 L4.3 4.2 L0 8.4" fill="none" stroke="#131722" stroke-width="1.5" stroke-linecap="round" stroke-linejoin="round"/></svg>
<svg class="a" style="left:1036.05px;top:336.90000000000003px" width="8.3" height="12.4" viewBox="-2 -2 8.3 12.4"><path d="M0 0 L4.3 4.2 L0 8.4" fill="none" stroke="#131722" stroke-width="1.5" stroke-linecap="round" stroke-linejoin="round"/></svg>
<svg class="a" style="left:1036.05px;top:376.90000000000003px" width="8.3" height="12.4" viewBox="-2 -2 8.3 12.4"><path d="M0 0 L4.3 4.2 L0 8.4" fill="none" stroke="#131722" stroke-width="1.5" stroke-linecap="round" stroke-linejoin="round"/></svg>
<svg class="a" style="left:1036.05px;top:416.90000000000003px" width="8.3" height="12.4" viewBox="-2 -2 8.3 12.4"><path d="M0 0 L4.3 4.2 L0 8.4" fill="none" stroke="#131722" stroke-width="1.5" stroke-linecap="round" stroke-linejoin="round"/></svg>
<svg class="a" style="left:1036.05px;top:456.90000000000003px" width="8.3" height="12.4" viewBox="-2 -2 8.3 12.4"><path d="M0 0 L4.3 4.2 L0 8.4" fill="none" stroke="#131722" stroke-width="1.5" stroke-linecap="round" stroke-linejoin="round"/></svg>
<svg class="a" style="left:1036.05px;top:496.90000000000003px" width="8.3" height="12.4" viewBox="-2 -2 8.3 12.4"><path d="M0 0 L4.3 4.2 L0 8.4" fill="none" stroke="#131722" stroke-width="1.5" stroke-linecap="round" stroke-linejoin="round"/></svg>
<svg class="a" style="left:688.8px;top:209px" width="28" height="28" viewBox="0 0 28 28"><circle cx="14" cy="13.75" r="10.3" fill="none" stroke="#131722" stroke-width="1.1"/><circle cx="14.3" cy="8.9" r="0.85" fill="#131722"/><path d="M12.8 11.8 H14.4 V19.8" fill="none" stroke="#131722" stroke-width="1.1"/></svg>
<svg class="a" style="left:688.8px;top:249px" width="28" height="28" viewBox="0 0 28 28"><g fill="none" stroke="#131722" stroke-width="1.1"><rect x="8.7" y="7.4" width="4.2" height="13.3"/><path d="M10.8 4.3 V7.4 M10.8 20.7 V23.8"/><rect x="16.5" y="10.2" width="4.5" height="7.3"/><path d="M18.75 7 V10.2 M18.75 17.5 V20.7"/></g></svg>
<svg class="a" style="left:688.8px;top:289px" width="28" height="28" viewBox="0 0 28 28"><g fill="none" stroke="#131722" stroke-width="1.1"><path d="M4.2 13.8 C7 11 8.4 7.9 10.5 7.9 C13 7.9 14.4 12.7 16.8 12.7 C19 12.7 21 9.2 23.1 7.1"/><path d="M4.5 18.7 V21.9 M7.7 15.9 V21.9 M10.8 14.1 V21.9 M13.7 15.9 V21.9 M16.8 18 V21.9 M19.9 15.9 V21.9 M23 14.1 V21.9"/></g></svg>
<svg class="a" style="left:688.8px;top:329px" width="28" height="28" viewBox="0 0 28 28"><g fill="none" stroke="#131722" stroke-width="1.1"><path d="M5.3 21.4 V16.1 H9.5 V21.4 M9.5 16.1 V10.2 H14 V21.4 M14 13.3 H17.9 V21.4 M17.9 13.3 V7.1 H22.1 V21.4 M4.75 21.4 H22.65"/></g></svg>
<svg class="a" style="left:688.8px;top:369px" width="28" height="28" viewBox="0 0 28 28"><g fill="none" stroke="#131722" stroke-width="1.1" stroke-linejoin="round"><path d="M13.6 5.6 L12.3 2.6 C13.6 3.6 14.6 2.4 15.4 2.4 C16.4 2.4 17 3.4 18 3.4 C19 3.4 19.8 2.6 21 2.6 L19.8 5.6 Z"/><path d="M13.6 5.6 C10.8 7.6 9.4 10.6 9.4 13.4 C9.4 15 9.9 16.3 10.8 17.2 M19.8 5.6 C22.6 7.6 24.1 10.6 24.1 13.4 C24.1 15 23.7 16.4 22.8 17.6"/><rect x="4.5" y="16.3" width="2.8" height="9.4" rx="0.6"/><path d="M7.3 17.9 C9.6 16.8 12 17.1 14.2 18.5 H18.3 C19.6 18.5 19.6 20.4 18.3 20.4 H14.2 M18.9 19.9 L23.2 17.7 C24.8 17 25.8 18.7 24.5 19.7 L19 23.5 C17.8 24.3 16.8 24.6 15.2 24.6 H7.3"/></g><text x="16.75" y="15.2" font-family="Liberation Sans" font-size="9.5" fill="#131722" text-anchor="middle">$</text></svg>
<svg class="a" style="left:688.8px;top:409px" width="28" height="28" viewBox="0 0 28 28"><defs><clipPath id="pc"><path d="M15.4 12.3 V3 A9.3 9.3 0 0 1 24.7 12.3 Z"/></clipPath></defs><g fill="none" stroke="#131722" stroke-width="1.1" stroke-linejoin="round"><path d="M13.7 5.1 A9 9 0 1 0 22.7 14.1 H13.7 Z"/><path d="M15.4 12.3 V3 A9.3 9.3 0 0 1 24.7 12.3 Z"/><g clip-path="url(#pc)"><path d="M14 9.5 L22 1.5 M14 13.5 L25.5 2 M18 13.5 L28 3.5" stroke-width="1"/></g></g></svg>
<svg class="a" style="left:688.8px;top:449px" width="28" height="28" viewBox="0 0 28 28"><g fill="none" stroke="#131722" stroke-width="1.1"><path d="M5.3 22.5 V19.1 H9.5 V22.5 M9.5 19.1 V16.3 H13.7 V22.5 M13.7 16.3 V12.4 H17.9 V22.5 M17.9 12.4 V8.2 H22.1 V22.5 M4.75 22.5 H22.65"/><path d="M5.3 13.8 L15.1 5.4 M11.9 5.4 H15.1 V8.6"/></g></svg>
<svg class="a" style="left:688.8px;top:489px" width="28" height="28" viewBox="0 0 28 28"><g fill="none" stroke="#131722" stroke-width="1.1" stroke-width="0.95"><ellipse cx="8.5" cy="9.1" rx="4.1" ry="1.7"/><path d="M4.4 9.1 V19.6 M12.6 9.1 V14"/><path d="M4.4 12.4 C4.4 14.6 12.6 14.6 12.6 12.4 M4.4 15.9 C4.4 17.9 10 18.2 12.2 17.4 M4.4 19.6 C4.4 21.6 9.5 22 12.3 21.2"/><ellipse cx="16.7" cy="15.1" rx="4.3" ry="1.7"/><path d="M12.4 15.1 V22.4 M21 15.1 V22.4"/><path d="M12.4 18.6 C12.4 20.8 21 20.8 21 18.6 M12.4 22.4 C12.4 24.6 21 24.6 21 22.4"/></g><text x="18.4" y="11" font-family="Liberation Sans" font-size="11" fill="#131722" text-anchor="middle">%</text></svg>
<span class="t" style="left:654.70px;top:78.02px;font-size:13px;color:#fff;font-weight:400;letter-spacing:0.341px;">Add new filter</span>
<span class="t" style="left:725.30px;top:158.77px;font-size:14.5px;color:#b2b5be;font-weight:400;letter-spacing:-0.105px;">Type filter name</span>
<span class="t" style="left:723.10px;top:216.67px;font-size:14.5px;color:#131722;font-weight:400;letter-spacing:0.034px;">Security info</span>
<span class="t" style="left:723.10px;top:256.67px;font-size:14.5px;color:#131722;font-weight:400;letter-spacing:0.042px;">Market data</span>
<span class="t" style="left:723.10px;top:296.67px;font-size:14.5px;color:#131722;font-weight:400;letter-spacing:-0.023px;">Technicals</span>
<span class="t" style="left:723.10px;top:336.67px;font-size:14.5px;color:#131722;font-weight:400;letter-spacing:-0.198px;">Financials</span>
<span class="t" style="left:723.10px;top:376.67px;font-size:14.5px;color:#131722;font-weight:400;letter-spacing:-0.021px;">Dividends</span>
<span class="t" style="left:723.10px;top:416.67px;font-size:14.5px;color:#131722;font-weight:400;letter-spacing:-0.049px;">Valuation</span>
<span class="t" style="left:723.10px;top:456.67px;font-size:14.5px;color:#131722;font-weight:400;letter-spacing:0.050px;">Growth</span>
<span class="t" style="left:723.10px;top:496.67px;font-size:14.5px;color:#131722;font-weight:400;letter-spacing:-0.127px;">Margins &amp; Ratios</span>
</div></body></html>
